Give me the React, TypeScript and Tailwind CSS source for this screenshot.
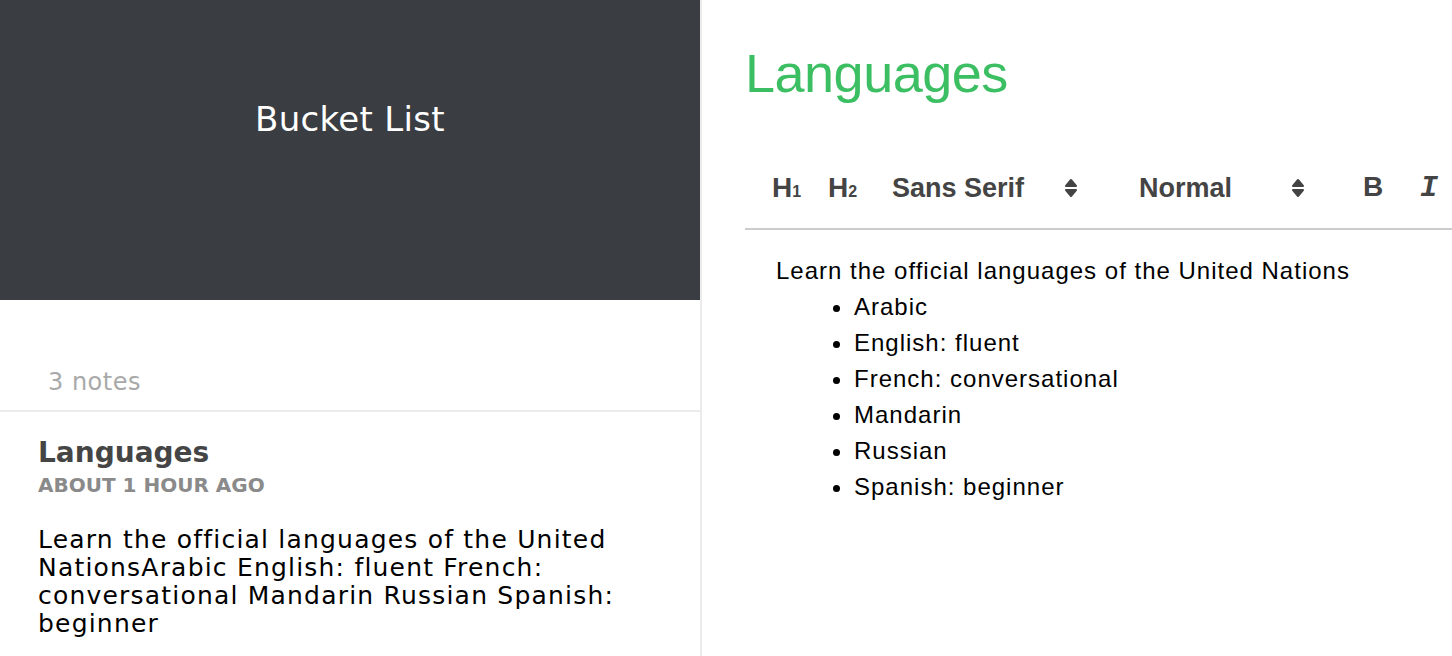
import React from "react";

const Arrows = () => (
  <svg width="14" height="20" viewBox="0 0 14 20" className="shrink-0">
    <polygon points="2,8 7,2 12,8" fill="#444" stroke="#444" strokeWidth="2" strokeLinejoin="round" />
    <polygon points="2,12 7,18 12,12" fill="#444" stroke="#444" strokeWidth="2" strokeLinejoin="round" />
  </svg>
);

export default function App() {
  const items = [
    "Arabic",
    "English: fluent",
    "French: conversational",
    "Mandarin",
    "Russian",
    "Spanish: beginner",
  ];
  return (
    <div className="flex h-[656px] w-[1452px] overflow-hidden bg-white">
      {/* Left panel */}
      <div className="w-[702px] shrink-0 border-r-2 border-[#ebebeb] font-['DejaVu_Sans',sans-serif]">
        <div className="h-[300px] bg-[#3a3d42] flex items-center justify-center pb-[62px]">
          <span className="text-white text-[34px] leading-[40px] tracking-[0.3px]">Bucket List</span>
        </div>
        <div className="pt-[67px] pb-[13px] pl-[48px] border-b-2 border-[#ebebeb]">
          <div className="text-[#a9a9a9] text-[24px] leading-[30px] tracking-[0.5px]">3 notes</div>
        </div>
        <div className="pl-[38px] pt-[25px] pr-[20px]">
          <div className="text-[#454545] text-[28px] leading-[32px] font-bold">Languages</div>
          <div className="mt-[3px] text-[#8a8a8a] text-[20px] leading-[26px] font-bold uppercase">About 1 hour ago</div>
          <div className="mt-[28px] text-black text-[25px] leading-[28px] tracking-[1.2px] whitespace-nowrap">
            Learn the official languages of the United
            <br />
            NationsArabic English: fluent French:
            <br />
            conversational Mandarin Russian Spanish:
            <br />
            beginner
          </div>
        </div>
      </div>

      {/* Right panel */}
      <div className="flex-1 pl-[43px] font-['Liberation_Sans',Arial,sans-serif]">
        <div className="mt-[43px] h-[60px] text-[54px] leading-[60px] text-[#3cbf63] tracking-[-0.5px]">Languages</div>
        <div className="mt-[45px] h-[82px] border-b-2 border-[#cccccc] flex items-center text-[#444]">
          <div className="ml-[27px] w-[56px] flex items-baseline">
            <span className="text-[28px] font-bold leading-none">H</span>
            <span className="text-[16px] font-bold leading-none">1</span>
          </div>
          <div className="w-[64px] flex items-baseline">
            <span className="text-[28px] font-bold leading-none">H</span>
            <span className="text-[16px] font-bold leading-none">2</span>
          </div>
          <div className="w-[247px] flex items-center">
            <span className="w-[172px] text-[27px] font-bold">Sans Serif</span>
            <Arrows />
          </div>
          <div className="w-[224px] flex items-center">
            <span className="w-[152px] text-[27px] font-bold">Normal</span>
            <Arrows />
          </div>
          <div className="w-[57px]">
            <span className="text-[28px] font-bold leading-none">B</span>
          </div>
          <div>
            <span className="text-[30px] font-bold italic leading-none font-['Liberation_Mono',monospace]">I</span>
          </div>
        </div>
        <div className="pt-[23px] pl-[31px] text-[24px] leading-[36px] tracking-[1px] text-black">
          <div>Learn the official languages of the United Nations</div>
          <ul className="list-disc pl-[78px]">
            {items.map((it) => (
              <li key={it}>{it}</li>
            ))}
          </ul>
        </div>
      </div>
    </div>
  );
}
